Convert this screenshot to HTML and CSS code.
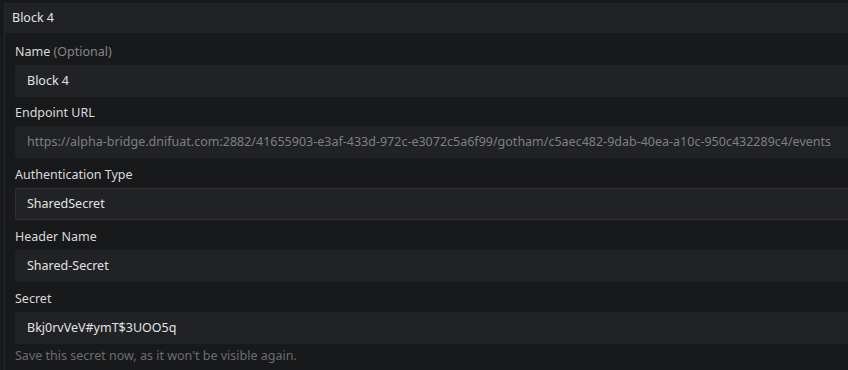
FILE: index.html
```html
<!DOCTYPE html>
<html>
<head>
<meta charset="utf-8">
<link rel="stylesheet" href="styles.css">
</head>
<body>
<div class="panel">
  <div class="panel-header">Block 4</div>
  <div class="panel-body">
    <div class="field first">
      <div class="label">Name <span class="muted">(Optional)</span></div>
      <div class="input">Block 4</div>
    </div>
    <div class="field">
      <div class="label">Endpoint URL</div>
      <div class="input disabled">https://alpha-bridge.dnifuat.com:2882/41655903-e3af-433d-972c-e3072c5a6f99/gotham/c5aec482-9dab-40ea-a10c-950c432289c4/events</div>
    </div>
    <div class="field">
      <div class="label">Authentication Type</div>
      <div class="input select">SharedSecret</div>
    </div>
    <div class="field">
      <div class="label">Header Name</div>
      <div class="input">Shared-Secret</div>
    </div>
    <div class="field">
      <div class="label">Secret</div>
      <div class="input">Bkj0rvVeV#ymT$3UOO5q</div>
      <div class="help">Save this secret now, as it won't be visible again.</div>
    </div>
  </div>
</div>
</body>
</html>
```

FILE: styles.css
```css
html, body {
  margin: 0;
  padding: 0;
  background: #18191b;
  overflow: hidden;
}
body {
  font-family: "Noto Sans", "Open Sans", sans-serif;
  font-size: 12.5px;
  color: #dcdcdc;
  height: 370px;
  padding-top: 3px;
  padding-left: 4px;
  box-sizing: border-box;
}
.panel {
  border-left: 1px solid #26272a;
  border-top: 1px solid #222326;
  height: 100%;
}
.panel-header {
  background: #212226;
  height: 29px;
  line-height: 27px;
  padding-left: 7px;
  color: #e2e2e2;
  white-space: nowrap;
}
.panel-body {
  padding: 8px 0 0 10px;
  display: flex;
  flex-direction: column;
}
.field {
  display: flex;
  flex-direction: column;
  margin-bottom: 6px;
}
.field.first {
  margin-bottom: 5px;
}
.label {
  height: 24px;
  line-height: 22px;
  color: #dadada;
  white-space: nowrap;
}
.muted {
  color: #85868a;
}
.input {
  height: 32px;
  line-height: 31px;
  background: #212226;
  border-radius: 3px 0 0 3px;
  padding-left: 12px;
  color: #e2e2e2;
  white-space: nowrap;
  overflow: hidden;
  box-sizing: border-box;
}
.input.disabled {
  color: #7e7f83;
}
.input.select {
  border: 1px solid #3a2c30;
  border-right: none;
  line-height: 29px;
  padding-left: 11px;
}
.help {
  margin-top: 2px;
  color: #6c6d71;
  white-space: nowrap;
  line-height: 20px;
}
```
